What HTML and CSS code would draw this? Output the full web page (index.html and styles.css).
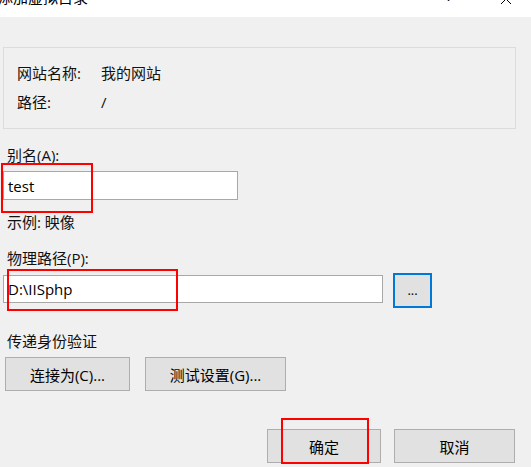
FILE: index.html
```html
<!DOCTYPE html>
<html lang="zh-CN">
<head>
<meta charset="utf-8">
<title>添加虚拟目录</title>
<link rel="stylesheet" href="styles.css">
</head>
<body>
<div class="window">
  <div class="titlebar">
    <span class="title">添加虚拟目录</span>
    <span class="help">?</span>
    <svg class="close" width="12" height="12" viewBox="0 0 12 12"><path d="M1 1 L11 11 M11 1 L1 11" stroke="#000" stroke-width="1" fill="none"/></svg>
  </div>
  <div class="content">
    <div class="infobox">
      <div class="row"><span class="key">网站名称:</span><span class="val">我的网站</span></div>
      <div class="row"><span class="key">路径:</span><span class="val">/</span></div>
    </div>

    <div class="label first">别名(A):</div>
    <div class="field-wrap">
      <div class="input alias">test</div>
      <div class="mark mark-alias"></div>
    </div>
    <div class="hint">示例: 映像</div>

    <div class="label phys">物理路径(P):</div>
    <div class="path-row">
      <div class="input path">D:\IISphp</div>
      <button class="btn browse">...</button>
      <div class="mark mark-path"></div>
    </div>

    <div class="label auth">传递身份验证</div>
    <div class="btn-row">
      <button class="btn connect">连接为(C)...</button>
      <button class="btn test">测试设置(G)...</button>
    </div>

    <div class="footer">
      <button class="btn ok">确定</button>
      <button class="btn cancel">取消</button>
      <div class="mark mark-ok"></div>
    </div>
  </div>
</div>
</body>
</html>
```

FILE: styles.css
```css
html, body {
  margin: 0;
  padding: 0;
  background: #f0f0f0;
}
body {
  width: 531px;
  height: 467px;
  overflow: hidden;
  font-family: "Open Sans", "Noto Sans CJK SC", sans-serif;
  font-size: 15px;
  color: #111;
}
.window {
  width: 531px;
}
.titlebar {
  height: 17px;
  background: #fff;
  display: flex;
  align-items: flex-start;
  overflow: hidden;
}
.title {
  font-size: 15px;
  line-height: 15px;
  margin-top: -10px;
  margin-left: -2px;
  color: #000;
}
.help {
  margin-left: auto;
  font-size: 14px;
  line-height: 14px;
  margin-top: -11px;
  margin-right: 48px;
  color: #000;
}
.close {
  margin-top: -7px;
  margin-right: 19px;
}
.content {
  padding: 0 16px 0 3px;
}
.infobox {
  margin-top: 30px;
  width: 513px;
  height: 82px;
  box-sizing: border-box;
  border: 1px solid #dcdcdc;
  padding: 11px 0 0 13px;
}
.row {
  display: flex;
  line-height: 29px;
}
.key {
  width: 84px;
}
.label, .hint {
  line-height: 20px;
  margin-left: 4px;
}
.label.first {
  margin-top: 16px;
}
.field-wrap {
  position: relative;
  margin-top: 6px;
}
.input {
  background: #fff;
  border: 1px solid #a8a8a8;
  box-sizing: border-box;
  padding-left: 4px;
  display: flex;
  align-items: center;
  color: #000;
}
.input.alias {
  width: 235px;
  height: 29px;
}
.hint {
  margin-top: 12px;
}
.label.phys {
  margin-top: 16px;
}
.path-row {
  position: relative;
  display: flex;
  align-items: flex-start;
  margin-top: 5px;
}
.input.path {
  width: 380px;
  height: 28px;
  margin-top: 2px;
  padding-left: 4px;
}
.btn {
  font-family: "Open Sans", "Noto Sans CJK SC", sans-serif;
  font-size: 15px;
  color: #000;
  background: #e1e1e1;
  border: 1px solid #adadad;
  box-sizing: border-box;
  height: 34px;
  padding: 0;
  margin: 0;
}
.browse {
  width: 39px;
  height: 35px;
  margin-left: 10px;
  border: 2px solid #0078d7;
  font-size: 13px;
  line-height: 13px;
}
.label.auth {
  margin-top: 23px;
}
.btn-row {
  display: flex;
  gap: 15px;
  margin-top: 6px;
  margin-left: 2px;
}
.connect { width: 125px; }
.test { width: 141px; }
.footer {
  position: relative;
  display: flex;
  justify-content: flex-end;
  gap: 13px;
  margin-top: 38px;
}
.ok { width: 114px; }
.cancel { width: 121px; }
.mark {
  position: absolute;
  border: 2px solid #ff0000;
  box-sizing: border-box;
}
.mark-alias {
  left: -2px;
  top: -8px;
  width: 92px;
  height: 50px;
}
.mark-path {
  left: 4px;
  top: -4px;
  width: 171px;
  height: 42px;
}
.mark-ok {
  left: 278px;
  top: -11px;
  width: 88px;
  height: 46px;
}
```
